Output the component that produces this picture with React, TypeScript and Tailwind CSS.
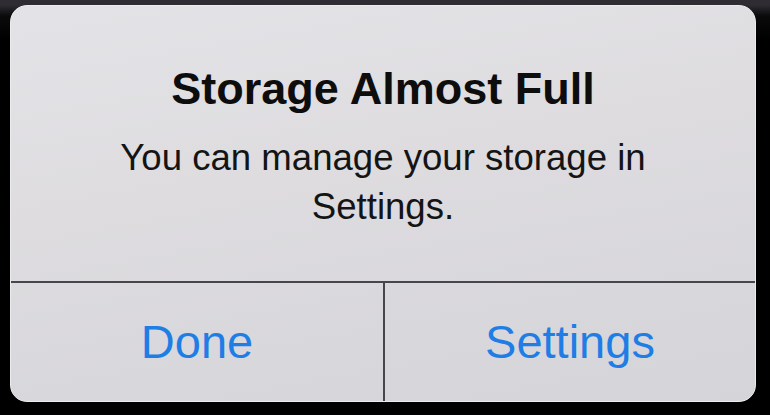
export default function App() {
  const font = { fontFamily: '"Liberation Sans", Arial, sans-serif' };

  return (
    <div
      className="w-[770px] h-[415px] overflow-hidden bg-[linear-gradient(to_bottom,#2f2c33_0px,#2f2c33_5px,#0a0a0b_16px,#000_40px)] pl-[10px] pt-[5px]"
      style={font}
    >
      {/* alert card */}
      <div className="w-[746px] h-[397px] rounded-[17px] overflow-hidden flex flex-col bg-[linear-gradient(170deg,#e3e3e7_0%,#dedcdf_40%,#d8d7dc_75%,#d5d4d9_100%)] border border-[#ececef]">
        <div className="h-[275px] flex flex-col items-center pt-[56px]">
          <h1 className="text-[45px] leading-[54px] font-bold text-[#0d0d0d]">
            Storage Almost Full
          </h1>
          <p className="mt-[17px] text-[36.6px] leading-[49px] text-[#141414] text-center">
            You can manage your storage in
            <br />
            Settings.
          </p>
        </div>
        <div className="flex-1 grid grid-cols-[374px_1fr] border-t-2 border-[#47464b]">
          <button className="flex items-center justify-center text-[47px] text-[#1f7de6] border-r-2 border-[#47464b]">
            Done
          </button>
          <button className="flex items-center justify-center text-[47px] text-[#1f7de6]">
            Settings
          </button>
        </div>
      </div>
    </div>
  );
}
